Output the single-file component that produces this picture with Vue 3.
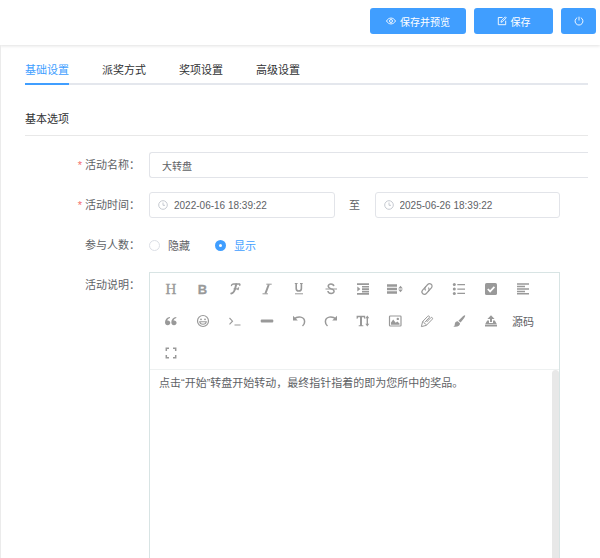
<script setup>
import { ref } from 'vue'

const tabs = ['基础设置', '派奖方式', '奖项设置', '高级设置']
const activeTab = ref('基础设置')
const name = ref('大转盘')
const start = ref('2022-06-16 18:39:22')
const end = ref('2025-06-26 18:39:22')
const visible = ref('show')
const description = ref('点击“开始”转盘开始转动，最终指针指着的即为您所中的奖品。')

const line = 'fill="none" stroke="currentColor"'
const serif = 'font-family="Liberation Serif, serif"'
const sans = 'font-family="Liberation Sans, sans-serif"'

const tools = [
  { title: '标题', art: `<text x="8" y="13" text-anchor="middle" font-size="15" fill="currentColor" stroke="currentColor" stroke-width=".3" ${serif}>H</text>` },
  { title: '粗体', art: `<text x="7.500" y="13" text-anchor="middle" font-size="13" font-weight="700" fill="currentColor" stroke="currentColor" stroke-width=".3" ${sans}>B</text>` },
  { title: '字体', art: `<path ${line} stroke-width="1.3" d="M4.5 5.2C4.2 3.6 5.4 2.9 7 3h6.2M13.2 3c-.2.8-.4 1.3-.8 1.7M6.600 7.800h4.800M11.600 6.400l-.7 2.800"/><path ${line} stroke-width="2" stroke-linecap="round" d="M9.200 3.200C8.400 6.500 7.800 12.600 4.300 12.500"/>` },
  { title: '斜体', art: `<path ${line} stroke-width="2" d="M9.800 3.500L6.400 12.500"/><path ${line} d="M7.300 3.200h5.400M3.500 12.800h5.400"/>` },
  { title: '下划线', art: `<path ${line} stroke-width="1.600" d="M5.200 2.500v5c0 3.400 5.200 3.400 5.200 0v-5"/><path ${line} d="M3.800 2.500h2.800M9 2.500h2.700M4 12.800h8"/>` },
  { title: '删除线', art: `<path ${line} stroke-width="1.500" d="M10.800 5.200C10.500 2.300 5.200 2.300 5.200 5.100c0 1.700 1.500 2.300 3 2.800 1.700.5 2.900 1 2.900 2.400 0 2.900-5.900 3-6.200-.3"/><path ${line} d="M2.500 8h11.500"/>` },
  { title: '缩进', art: `<path fill="currentColor" d="M2 2.300h12v1.700H2zM7 4.900h7v1.700H7zM7 7.300h7v1.700H7zM7 9.700h7v1.700H7zM2 12.100h12v1.700H2zM2.300 5.400L5.400 8l-3.100 2.600z"/>` },
  { title: '行高', art: `<path fill="currentColor" d="M0 3.300h10v2.400H0zM0 6.800h10v2.400H0zM0 10.300h10v2.400H0zM13.500 4.800l2.300 2.800h-4.600zM13.500 11.200l2.300-2.800h-4.600z"/>` },
  { title: '链接', art: `<g transform="rotate(-48 8 8)" ${line} stroke-width="1.200"><path d="M9.300 5.500H4.200a2.500 2.500 0 0 0 0 5h3.200a2.500 2.500 0 0 0 2.500-2.500"/><path d="M6.700 10.500h5.100a2.500 2.500 0 0 0 0-5H8.600A2.500 2.500 0 0 0 6.100 8"/></g>` },
  { title: '列表', art: `<g fill="currentColor"><circle cx="3.300" cy="3.600" r="1.500"/><circle cx="3.300" cy="8" r="1.500"/><circle cx="3.300" cy="12.400" r="1.500"/><path d="M6.300 3h7.700v1.300H6.300zM6.300 7.400h7.700v1.300H6.300zM6.300 11.800h7.700v1.300H6.300z"/></g>` },
  { title: '待办', art: `<rect x="2" y="2" width="12" height="12" rx="1.600" fill="currentColor"/><path d="M4.800 8l2.300 2.400 4.300-4.500" fill="none" stroke="#fff" stroke-width="1.700"/>` },
  { title: '对齐', art: `<path fill="currentColor" d="M2 2.300h12v1.500H2zM2 4.700h8v1.500H2zM2 7.200h12v1.500H2zM2 9.700h8v1.500H2zM2 12.100h12v1.500H2z"/>` },
  { title: '引用', art: `<g fill="currentColor"><path d="M7 4c-3.200.4-5 2.600-5 5.300C2 11.200 3.100 12.300 4.700 12.300c1.500 0 2.600-1.100 2.600-2.500S6.300 7.400 4.900 7.400c-.3 0-.5 0-.7.1C4.500 6.100 5.400 5.300 7 4.900z"/><path d="M13.300 4c-3.200.4-5 2.600-5 5.300 0 1.900 1.100 3 2.700 3 1.500 0 2.600-1.100 2.600-2.500s-1-2.400-2.400-2.400c-.3 0-.5 0-.7.1.3-1.400 1.200-2.200 2.800-2.600z"/></g>` },
  { title: '表情', art: `<circle cx="8" cy="8" r="5.500" ${line} stroke-width="1.200"/><circle cx="6" cy="6.300" r=".9" fill="currentColor"/><circle cx="10" cy="6.300" r=".9" fill="currentColor"/><path ${line} stroke-width="1.100" d="M4.700 8.700h6.600c-.4 3.400-6.200 3.400-6.600 0z"/>` },
  { title: '代码', art: `<path ${line} stroke-width="1.100" d="M2.500 5l3 3.200-3 3.200M7.500 12h6"/>` },
  { title: '分割线', art: `<rect x="1.700" y="6.500" width="12.600" height="3" rx="1" fill="currentColor"/>` },
  { title: '撤销', art: `<path ${line} stroke-width="1.500" d="M2.900 6.100c4-3.500 10.700-2.600 10.700 2.600 0 1.700-.8 3.200-2.100 4.300"/><path fill="currentColor" d="M2 2.800v4.800h4.800z"/>` },
  { title: '重做', art: `<path ${line} stroke-width="1.500" d="M13.100 6.100c-4-3.500-10.700-2.600-10.700 2.600 0 1.700.8 3.200 2.100 4.300"/><path fill="currentColor" d="M14 2.800v4.800H9.200z"/>` },
  { title: '字号', art: `<path fill="currentColor" d="M1.600 2.800h8.600v2.900h-.8L8.800 4.200H7v8h1.300v1H3.700v-1H5v-8H3.200l-.7 1.500h-.9zM12.300 2.600l2 2.600H13v5.600h1.300l-2 2.600-2-2.600h1.300V5.200h-1.300z"/>` },
  { title: '图片', art: `<rect x="2.500" y="3" width="11.500" height="10" rx=".8" ${line} stroke-width="1.200"/><path fill="currentColor" d="M4 11.700V9.500l2.200-3 2.500 3.200 1.600-1.300 2.200 2v1.300z"/><circle cx="10.800" cy="5.900" r="1.200" fill="currentColor"/>` },
  { title: '颜色', art: `<path ${line} d="M2.400 13.600l1.200-5L8.700 3.300c1-1 2.300.1 1.600 1.200L6.200 8.900M2.400 13.600l4.900-1.200 6-6.200c.9-1-.5-2.400-1.500-1.500L7.600 9.100"/><path ${line} stroke-width=".9" d="M3.600 8.600c1.200 0 1.600.7 1.700 1.800 1.200.1 1.900.7 2 2"/>` },
  { title: '背景色', art: `<path fill="currentColor" d="M14 2.300c.5.4-.1 1.700-1 3L9.600 9.600 7.400 7.700l3.800-3.800c1.200-1.200 2.300-2 2.800-1.600zM6.700 8.300l2.300 2c.1 2.400-2.300 4.100-6.900 3.300 1.600-.5 1.500-1.400 1.700-2.700.2-1.600 1.500-2.700 2.900-2.600z"/>` },
  { title: '上传', art: `<path fill="currentColor" d="M8 2.200l3.600 3.800H9v3H7V6H4.400zM4.200 7.600H6V10h4V7.600h1.800L14 11.400H2zM2 12h12v1.600H2z"/>` },
  { title: '源码', text: '源码' },
  { title: '全屏', art: `<path ${line} stroke-width="1.500" d="M3.300 6V3.300H6M10 3.300h2.700V6M12.700 10v2.700H10M6 12.700H3.300V10"/>` }
]
</script>

<template>
  <div class="page">
    <header class="topbar">
      <button class="btn preview" type="button">
        <svg viewBox="0 0 10 10" aria-hidden="true">
          <path d="M.5 5C2.600 1.100 7.400 1.100 9.500 5 7.400 8.900 2.600 8.900.5 5z" />
          <circle cx="5" cy="5" r="1.500" />
        </svg>
        保存并预览
      </button>
      <button class="btn save" type="button">
        <svg viewBox="0 0 10 10" aria-hidden="true">
          <path d="M5.500 1.500H1.300v7.200h7.400V4.700M4 6.300l.3-1.500L8.300.9l1 1-4 3.900z" />
        </svg>
        保存
      </button>
      <button class="btn power" type="button" aria-label="退出">
        <svg viewBox="0 0 10 10" aria-hidden="true">
          <path d="M3.200 1.700a3.900 3.900 0 1 0 3.600 0M5 .7v3.800" />
        </svg>
      </button>
    </header>

    <main class="content">
      <nav class="tabs" role="tablist">
        <button
          v-for="tab in tabs"
          :key="tab"
          type="button"
          role="tab"
          class="tab"
          :class="{ active: tab === activeTab }"
          :aria-selected="tab === activeTab"
          @click="activeTab = tab"
        >{{ tab }}</button>
      </nav>

      <h2 class="section-title">基本选项</h2>

      <form class="form" @submit.prevent>
        <div class="row">
          <label class="label required" for="name">活动名称：</label>
          <input id="name" v-model="name" class="field name" type="text">
        </div>

        <div class="row inset">
          <label class="label required" for="start">活动时间：</label>
          <div class="range">
            <div class="field date">
              <svg viewBox="0 0 10 10" aria-hidden="true"><circle cx="5" cy="5" r="4.300" /><path d="M5 2.500V5.300h2" /></svg>
              <input id="start" v-model="start" type="text">
            </div>
            <label class="to" for="end">至</label>
            <div class="field date">
              <svg viewBox="0 0 10 10" aria-hidden="true"><circle cx="5" cy="5" r="4.300" /><path d="M5 2.500V5.300h2" /></svg>
              <input id="end" v-model="end" type="text">
            </div>
          </div>
        </div>

        <div class="row" role="radiogroup" aria-labelledby="count-label">
          <span id="count-label" class="label">参与人数：</span>
          <div class="radios">
            <label class="radio"><input v-model="visible" type="radio" name="count" value="hide"><span>隐藏</span></label>
            <label class="radio"><input v-model="visible" type="radio" name="count" value="show"><span>显示</span></label>
          </div>
        </div>

        <div class="row inset grow">
          <label class="label" for="description">活动说明：</label>
          <div class="editor">
            <div class="toolbar" role="toolbar">
              <button v-for="tool in tools" :key="tool.title" class="tool" type="button" :aria-label="tool.title">
                <template v-if="tool.text">{{ tool.text }}</template>
                <svg v-else viewBox="0 0 16 16" aria-hidden="true" v-html="tool.art"></svg>
              </button>
            </div>
            <div class="writing">
              <textarea id="description" v-model="description" spellcheck="false"></textarea>
              <div class="scroll-thumb"></div>
            </div>
          </div>
        </div>
      </form>
    </main>
  </div>
</template>

<style>
body {
  background: #fff;
}
</style>

<style scoped>
.page,
.page * {
  box-sizing: border-box;
}
.page {
  display: flex;
  flex-direction: column;
  height: 100vh;
  overflow: hidden;
  color: #606266;
  font-family: "Liberation Sans", "Noto Sans CJK SC", sans-serif;
  font-size: 11px;
}
button,
input,
textarea {
  margin: 0;
  padding: 0;
  border: 0;
  background: none;
  color: inherit;
  font: inherit;
  outline: none;
}
button {
  cursor: pointer;
}
.topbar {
  display: flex;
  flex: none;
  justify-content: flex-end;
  gap: 8px;
  height: 45px;
  padding: 8px 4px 0 0;
  box-shadow: 0 1px 3px rgba(0, 0, 0, 0.12);
}
.btn {
  display: flex;
  align-items: center;
  justify-content: center;
  gap: 4px;
  height: 26px;
  border-radius: 3px;
  background: #409eff;
  color: #fff;
  font-size: 10px;
}
.preview {
  min-width: 96px;
}
.save {
  min-width: 79px;
}
.power {
  min-width: 35px;
}
.btn svg,
.date svg {
  flex: none;
  width: 10px;
  height: 10px;
  fill: none;
  stroke: currentColor;
  stroke-width: 0.9;
}
.content {
  display: flex;
  flex: 1;
  flex-direction: column;
  min-height: 0;
  padding: 8px 12px 0 24px;
  border-left: 1px solid #ebebeb;
}
.tabs {
  display: flex;
  flex: none;
  gap: 33px;
  box-shadow: inset 0 -2px #e4e7ed;
}
.tab {
  height: 32px;
  color: #303133;
}
.tab.active {
  color: #409eff;
  box-shadow: inset 0 -2px #409eff;
}
.section-title {
  flex: none;
  height: 34px;
  margin: 17px 0 16px;
  border-bottom: 1px solid #e8e8e8;
  color: #303133;
  font-size: 11px;
  font-weight: 400;
  line-height: 34px;
}
.form {
  display: flex;
  flex: 1;
  flex-direction: column;
  gap: 14px;
  min-height: 0;
}
.row {
  display: grid;
  grid-template-columns: 115px minmax(0, 1fr);
  gap: 9px;
}
.inset {
  padding-right: 28px;
}
.grow {
  flex: 1;
  min-height: 0;
}
.label {
  line-height: 26px;
  text-align: right;
}
.required::before {
  content: "*";
  margin-right: 3px;
  color: #f56c6c;
}
.field {
  height: 26px;
  border: 1px solid #e2e4e9;
  border-radius: 3px;
  font-size: 10px;
}
.name {
  width: 100%;
  padding: 0 12px;
  border-right: 0;
  border-radius: 3px 0 0 3px;
}
.range {
  display: flex;
}
.date {
  display: flex;
  flex: 1;
  align-items: center;
  gap: 6px;
  min-width: 0;
  padding: 0 8px;
}
.date svg {
  color: #c0c4cc;
}
.date input {
  flex: 1;
  min-width: 0;
}
.to {
  width: 40px;
  line-height: 26px;
  text-align: center;
}
.radios {
  display: flex;
  gap: 25px;
}
.radio {
  display: flex;
  align-items: center;
  gap: 8px;
}
.radio input {
  appearance: none;
  width: 11px;
  height: 11px;
  border: 1px solid #dcdfe6;
  border-radius: 50%;
}
.radio input:checked {
  border: 4px solid #409eff;
  background: #fff;
}
.radio input:checked + span {
  color: #409eff;
}
.editor {
  display: flex;
  flex-direction: column;
  min-height: 0;
  border: 1px solid #d8e4e4;
  border-bottom: 0;
}
.toolbar {
  display: flex;
  flex: none;
  flex-wrap: wrap;
  padding: 0 5px;
  border-bottom: 1px solid #eef1f1;
}
.tool {
  display: flex;
  align-items: center;
  justify-content: center;
  width: 32px;
  height: 32px;
  color: #606266;
}
.tool svg {
  width: 16px;
  height: 16px;
  color: #999;
}
.writing {
  display: flex;
  flex: 1;
  min-height: 0;
}
.writing textarea {
  flex: 1;
  min-width: 0;
  padding: 4px 9px;
  line-height: 18px;
  resize: none;
}
.scroll-thumb {
  width: 7px;
  border-radius: 4px 4px 0 0;
  background: #e8e8e8;
}
</style>
